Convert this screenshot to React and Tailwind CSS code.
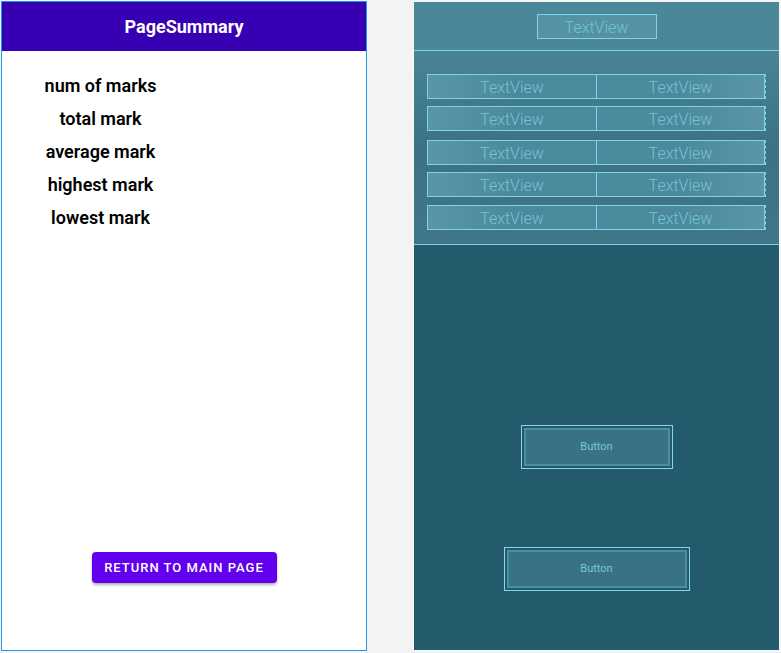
const labels = ["num of marks", "total mark", "average mark", "highest mark", "lowest mark"];

const BlueBox = ({ className, children }) => (
  <div
    className={`flex items-center justify-center border border-[#7fd3e6] pt-[3px] text-[16px] font-light text-[#74c4d6] ${className}`}
  >
    {children}
  </div>
);

const BlueButton = ({ width }) => (
  <div className={`${width} h-[44px] border border-[#86d6ea] p-[2px]`}>
    <div className="flex h-full items-center justify-center border-2 border-[#4b8ea0] bg-[#397284] text-[11px] text-[#7cc6d8]">
      Button
    </div>
  </div>
);

const DesignView = () => (
  <div className="flex h-[650px] w-[367px] flex-col border border-[#f8f8f8] font-['Roboto',sans-serif]">
    <div className="flex h-[49px] items-center justify-center border-b border-[#7fd3e6] bg-[#4a8799]">
      <BlueBox className="h-[25px] w-[120px] bg-[#5592a3]">TextView</BlueBox>
    </div>

    <div className="flex flex-col gap-[7px] border-b border-[#7fd3e6] bg-gradient-to-b from-[#4a8396] via-[#3b7385] to-[#3f7789] px-[13px] pt-[23px] pb-[14px]">
      {[0, 1, 2, 3, 4].map((i) => (
        <div key={i} className={`flex ${i === 2 ? "mt-[2px]" : i === 4 ? "mt-[1px]" : ""}`}>
          <BlueBox className="h-[25px] w-[170px] bg-gradient-to-r from-[#5a96a7] via-[#4b8a9c] to-[#4b8a9c]">TextView</BlueBox>
          <BlueBox className="-ml-px h-[25px] w-[169px] bg-gradient-to-r from-[#4b8a9c] via-[#4b8a9c] to-[#5a96a7]">TextView</BlueBox>
          <div className="h-[25px] border-r border-dashed border-[#7fd3e6]" />
        </div>
      ))}
    </div>

    <div className="flex flex-1 flex-col items-center bg-[#235b6c] pt-[180px]">
      <BlueButton width="w-[152px]" />
      <div className="mt-[78px]">
        <BlueButton width="w-[186px]" />
      </div>
    </div>
  </div>
);

const PhoneView = () => (
  <div className="flex h-[650px] w-[366px] flex-col border border-[#2196f3] bg-white font-['Roboto',sans-serif]">
    <div className="flex h-[49px] items-center justify-center bg-[#3700b3] text-[18px] font-bold text-white">
      PageSummary
    </div>

    <div className="flex w-[197px] flex-col items-center pt-[18px]">
      {labels.map((label) => (
        <div key={label} className="h-[33px] text-[18px] font-semibold leading-[33px] text-black">
          {label}
        </div>
      ))}
    </div>

    <div className="mt-auto mb-[67px] flex justify-center">
      <button className="h-[31px] w-[185px] rounded bg-[#6200ee] text-[13px] font-medium tracking-[1px] text-white shadow-[0_2px_3px_rgba(0,0,0,0.3)]">
        RETURN TO MAIN PAGE
      </button>
    </div>
  </div>
);

export default function App() {
  return (
    <div className="flex h-[653px] w-[781px] gap-[46px] bg-[#f3f3f3] pt-px pl-px">
      <PhoneView />
      <DesignView />
    </div>
  );
}
